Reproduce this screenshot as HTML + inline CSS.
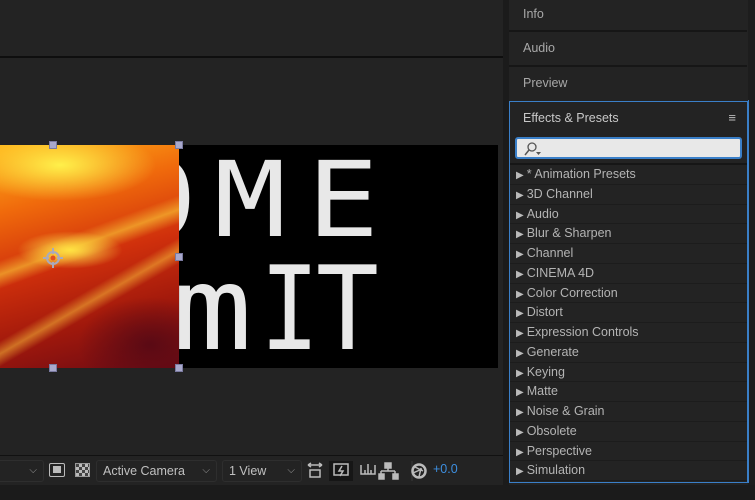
<!DOCTYPE html>
<html><head><meta charset="utf-8"><style>
*{margin:0;padding:0;box-sizing:border-box}
body{width:755px;height:500px;background:#232323;overflow:hidden;position:relative;font-family:"Liberation Sans",sans-serif}
.a{position:absolute}
.tab{position:absolute;left:509px;width:238px;color:#a8a8a8;font-size:12.5px;padding-left:14px;background:#232323}
.row{height:19.75px;border-bottom:1px solid #1c1c1c;color:#b4b4b4;font-size:12.5px;line-height:19px;padding-left:6px;white-space:nowrap}
.row b{font-weight:normal;font-size:10px;margin-right:3px;color:#bbb}
.h{position:absolute;width:8px;height:8px;background:#a9a9cc;border:1px solid #7a7aa0}
.g{position:absolute;font-family:"DejaVu Sans Mono","Liberation Mono",monospace;color:#e8e8e8;font-size:104px;line-height:1;transform:scaleX(1.15);transform-origin:0 0}
.g2{font-size:116px}
.dd{position:absolute;top:460px;height:22px;border:1px solid #2e2e2e;border-radius:3px;color:#c0c0c0;font-size:12.5px;line-height:20px;padding-left:6px}
</style></head><body>
<div class="a" style="left:0;top:56px;width:503px;height:2px;background:#0e0e0e"></div>
<div class="a" style="left:503px;top:0;width:6px;height:485px;background:#1b1b1b"></div>
<div class="a" style="left:748px;top:0;width:7px;height:500px;background:#1d1d1d"></div>
<div class="a" style="left:748px;top:100px;width:1px;height:383px;background:#3a7fc8"></div>

<!-- comp -->
<div class="a" style="left:178px;top:145px;width:320px;height:223px;background:#000;overflow:hidden">
  <div class="g" style="left:-54px;top:3px">O</div>
  <div class="g" style="left:36px;top:3px">M</div>
  <div class="g" style="left:129px;top:3px">E</div>
  <div class="g g2" style="left:-6px;top:107px">m</div>
  <div class="g g2" style="left:82px;top:107px;transform:scaleX(0.85)">I</div>
  <div class="g g2" style="left:138px;top:107px;transform:scaleX(0.9)">T</div>
</div>
<div class="a" style="left:0;top:145px;width:179px;height:223px;overflow:hidden;background:
linear-gradient(160deg,rgba(0,0,0,0) 40%,rgba(255,220,60,.55) 45%,rgba(0,0,0,0) 50%),
linear-gradient(150deg,rgba(0,0,0,0) 60%,rgba(255,200,60,.5) 64%,rgba(0,0,0,0) 68%),
radial-gradient(ellipse 70px 25px at 70px 105px,#ffe84a,rgba(255,200,40,0) 75%),
radial-gradient(ellipse 120px 45px at 60px 20px,#fff04a,rgba(255,170,20,0) 80%),
radial-gradient(ellipse 90px 60px at 150px 200px,#5a0a14,rgba(90,10,16,0) 80%),
linear-gradient(165deg,#ffb018 0%,#f06a0c 25%,#d0300c 50%,#a0180c 75%,#6a0a14 100%)"></div>
<svg class="a" style="left:40px;top:245px" width="26" height="26" viewBox="0 0 26 26"><circle cx="13" cy="13" r="6" fill="none" stroke="#aab" stroke-width="2"/><path d="M13 3v6M13 17v6M3 13h6M17 13h6" stroke="#aab" stroke-width="2"/><circle cx="13" cy="13" r="2.5" fill="#e05020"/></svg>
<div class="h" style="left:49px;top:141px"></div>
<div class="h" style="left:175px;top:141px"></div>
<div class="h" style="left:175px;top:253px"></div>
<div class="h" style="left:49px;top:364px"></div>
<div class="h" style="left:175px;top:364px"></div>

<!-- toolbar -->
<div class="a" style="left:0;top:455px;width:503px;height:1px;background:#111"></div>
<div class="a" style="left:0;top:485px;width:755px;height:15px;background:#1b1b1b"></div>
<div class="a" style="left:-4px;top:460px;width:48px;height:22px;border:1px solid #2e2e2e;border-radius:3px;color:#999;font-size:10px;text-align:right;padding-right:6px;line-height:20px">⌵</div>
<div class="a" style="left:49px;top:463px;width:16px;height:14px;border:1.5px solid #bbb;border-radius:2px"><div style="margin:2px 3px;height:7px;background:#bbb"></div></div>
<div class="a" style="left:75px;top:463px;width:15px;height:14px;background:repeating-conic-gradient(#bbb 0 25%,#444 0 50%) 0 0/6px 6px;border:1px solid #999"></div>
<div class="dd" style="left:96px;width:121px">Active Camera<span style="position:absolute;right:6px;color:#999;font-size:10px">⌵</span></div>
<div class="dd" style="left:222px;width:80px">1 View<span style="position:absolute;right:6px;color:#999;font-size:10px">⌵</span></div>
<svg class="a" style="left:306px;top:461px" width="200" height="20" viewBox="0 0 200 20" fill="none" stroke="#bbb" stroke-width="1.5">
<path d="M2 4h14M2 4l3-2M2 4l3 2M16 4l-3-2M16 4l-3 2M4 9h10v7H4z"/>
<rect x="23" y="0" width="24" height="20" fill="#161616" stroke="none"/>
<path d="M28 3h14v11H28zM36 5l-3 5h4l-3 5"/>
<path d="M55 4v9h14V4M59 9v4M62 3v10M65 9v4"/>
<path d="M79 2h6v5h-6zM82 7v3M75 10h14M75 10v3M89 10v3M73 13h5v5h-5zM87 13h5v5h-5z" fill="#bbb"/>
<path d="M106 0v20" stroke="#333"/>
<circle cx="113" cy="10" r="6.5" stroke-width="2.5"/><path d="M109 6l8 4M113 16l2-9M107 12l9-4" stroke-width="1.5"/>
</svg>
<div class="a" style="left:433px;top:462px;color:#3d8fe0;font-size:12.5px">+0.0</div>

<!-- right panels -->
<div class="tab" style="top:0;height:30px;line-height:28px">Info</div>
<div class="a" style="left:509px;top:30px;width:238px;height:2px;background:#161616"></div>
<div class="tab" style="top:32px;height:33px;line-height:33px">Audio</div>
<div class="a" style="left:509px;top:65px;width:238px;height:2px;background:#161616"></div>
<div class="tab" style="top:67px;height:33px;line-height:33px">Preview</div>
<div class="a" style="left:509px;top:101px;width:239px;height:382px;border:1px solid #3a7fc8;background:#232323">
  <div style="height:32px;line-height:32px;padding-left:13px;color:#c8c8c8;font-size:12.5px">Effects &amp; Presets<span style="position:absolute;right:11px;font-size:13px;color:#bbb">≡</span></div>
  <div style="margin:3px 5px 0 5px;height:22px;background:#e8e8e8;border:2px solid #3a7fc8;border-radius:3px;position:relative">
    <svg width="24" height="18" style="position:absolute;left:4px;top:1px"><circle cx="11" cy="7" r="4" fill="none" stroke="#555" stroke-width="1.3"/><path d="M8 10l-4 5" stroke="#555" stroke-width="1.5"/><path d="M15 12h5l-2.5 3z" fill="#555"/></svg>
  </div>
  <div style="margin-top:4px;border-top:2px solid #161616">
    <div class="row"><b>▶</b>* Animation Presets</div>
    <div class="row"><b>▶</b>3D Channel</div>
    <div class="row"><b>▶</b>Audio</div>
    <div class="row"><b>▶</b>Blur &amp; Sharpen</div>
    <div class="row"><b>▶</b>Channel</div>
    <div class="row"><b>▶</b>CINEMA 4D</div>
    <div class="row"><b>▶</b>Color Correction</div>
    <div class="row"><b>▶</b>Distort</div>
    <div class="row"><b>▶</b>Expression Controls</div>
    <div class="row"><b>▶</b>Generate</div>
    <div class="row"><b>▶</b>Keying</div>
    <div class="row"><b>▶</b>Matte</div>
    <div class="row"><b>▶</b>Noise &amp; Grain</div>
    <div class="row"><b>▶</b>Obsolete</div>
    <div class="row"><b>▶</b>Perspective</div>
    <div class="row"><b>▶</b>Simulation</div>
  </div>
</div>
</body></html>
